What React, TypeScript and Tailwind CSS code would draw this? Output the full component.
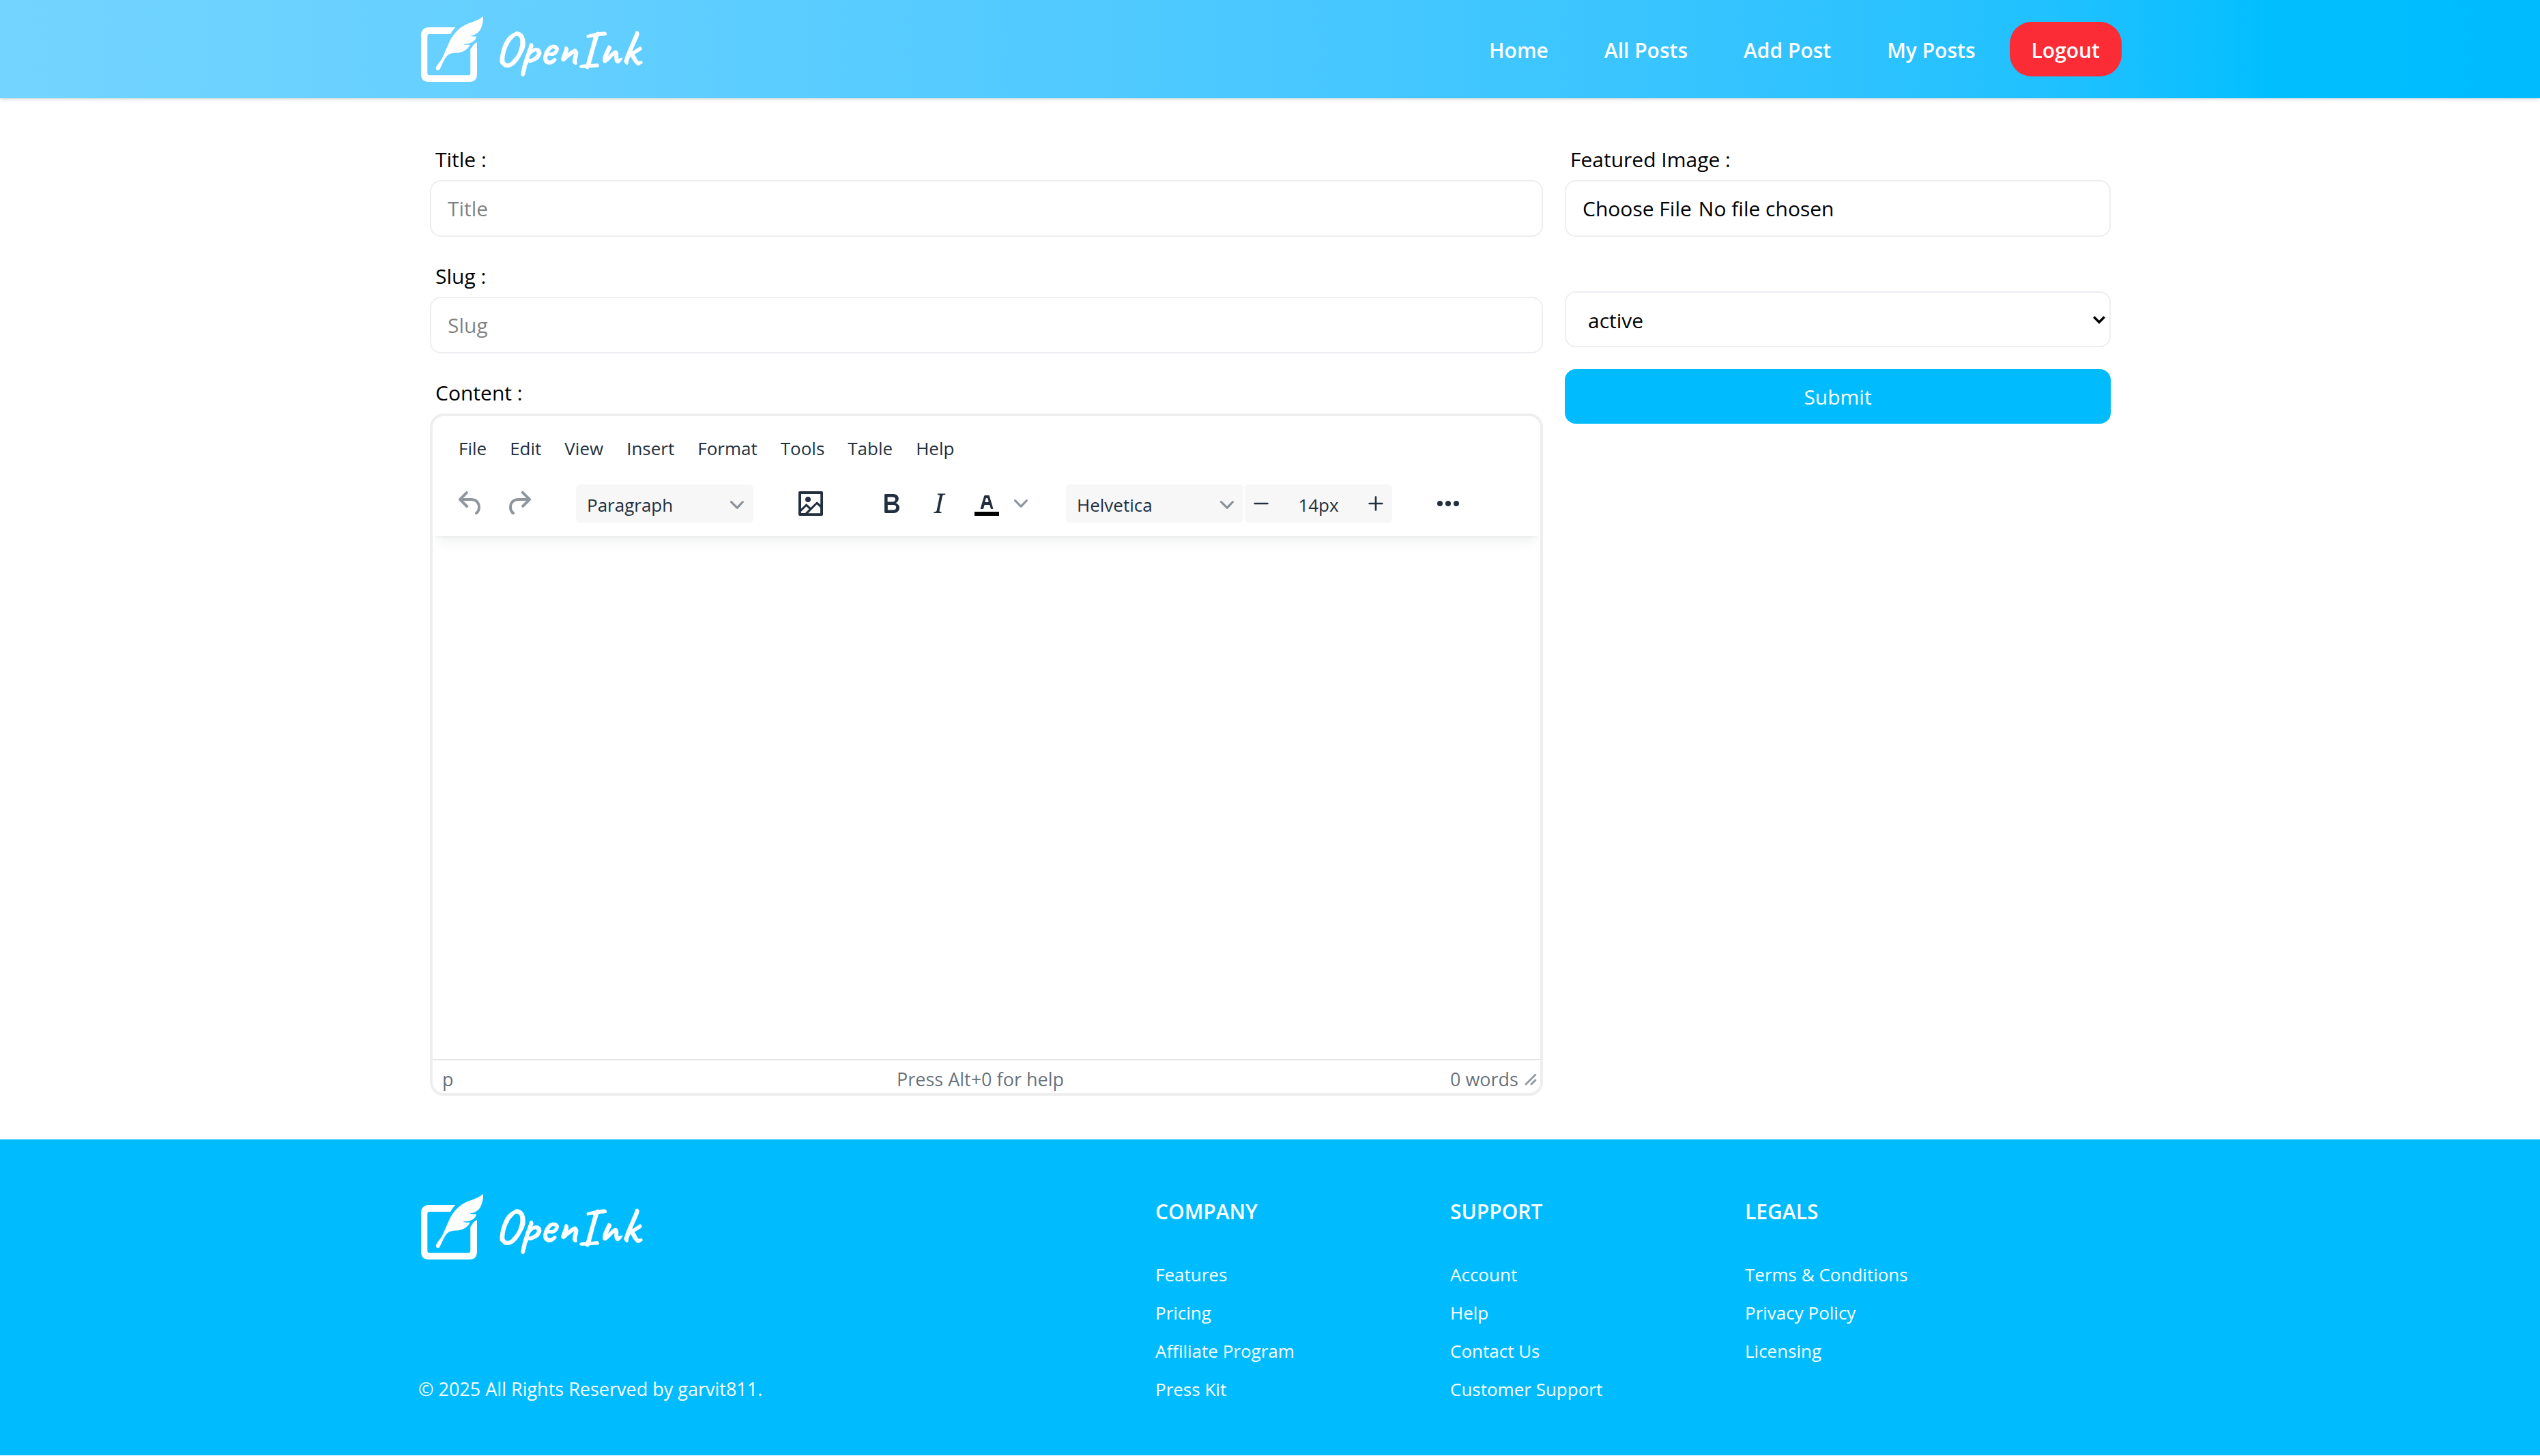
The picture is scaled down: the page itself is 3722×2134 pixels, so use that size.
import type { ReactNode } from 'react';

function Logo() {
  return (
    <span className="flex items-center gap-3 text-white">
      <svg viewBox="0 0 100 104" className="h-[104px] w-[100px]" fill="currentColor" aria-hidden="true">
        <path d="M54.3 20H15.5Q4 20.5 4 32V88.5Q4 100 15.5 100H74.5Q86 100 86 88.5V42Q83 43.5 80.3 46Q79 49 76.3 52V87Q76.3 90.3 73.3 90.3H16.3Q13.3 90.3 13.3 87V33Q13.3 30 16.3 30H47Q50 24.5 54.3 20Z" />
        <path d="M95 4C90 8 86 9.500 82 11.300C77 13.500 73 14.300 70.300 15.700C66.500 17.500 63 19.500 60.300 22C57 25 54 28 52 30.700C49.500 34 47 38 45.300 41.700L38.700 56.700C37 61 35.500 64.500 33.700 67.300C31 71.500 28 74.500 26.300 78C25.300 80 25.800 81.500 26.800 82.500C28.500 84 30.500 83.200 31.500 81.300L35.300 73.300C37 69.500 38.500 66.500 40.300 64C43 60.500 45.500 59 48.700 58.300C53 57.300 56.500 57.800 60.300 57C64.500 56.200 67.500 54.800 70.300 52.500C73.300 50 75 48 75.300 45.300C72 46.300 68.500 46 65.300 44.300C69 44.500 72.500 44.200 75.300 43.300C81.500 41.500 84.500 38 85 33.300C82 34 78.500 33.500 75.300 32.300C79 32 82.500 31.500 85.300 29.300C89 26.500 91 24 92 20.700C94.500 15.500 95.200 9.500 95 4Z" />
      </svg>
      <span className="font-[Caveat,cursive] text-[72px] leading-none font-bold">OpenInk</span>
    </span>
  );
}

const navItems = ['Home', 'All Posts', 'Add Post', 'My Posts'];

function Header() {
  return (
    <header className="relative bg-linear-to-r from-sky-300 to-sky-400 shadow-[0_2px_6px_rgba(0,0,0,0.1),0_2px_4px_-2px_rgba(0,0,0,0.1)]">
      <div className="mx-auto flex h-36 max-w-[2560px] items-center px-8">
        <a href="#home" aria-label="OpenInk home">
          <Logo />
        </a>
        <nav className="ml-auto flex gap-[18px] text-[30px] leading-[48px] font-semibold text-white">
          {navItems.map((item) => (
            <button key={item} type="button" className="rounded-[32px] px-8 pt-[18px] pb-[14px]">
              {item}
            </button>
          ))}
          <button type="button" className="rounded-[32px] bg-[#fb2c36] px-8 pt-[18px] pb-[14px]">
            Logout
          </button>
        </nav>
      </div>
    </header>
  );
}

function TextField({ id, label }: { id: string; label: string }) {
  return (
    <div className="mb-8">
      <label htmlFor={id} className="mb-1 block pl-2 leading-[52px]">
        {label} :
      </label>
      <input
        id={id}
        type="text"
        placeholder={label}
        className="h-[83px] w-full rounded-2xl border-2 border-[#eceef1] bg-white px-6 text-black outline-none"
      />
    </div>
  );
}

function Icon({ d, className = 'size-12' }: { d: string; className?: string }) {
  return (
    <svg viewBox="0 0 24 24" className={className} fill="currentColor" fillRule="evenodd" aria-hidden="true">
      <path d={d} />
    </svg>
  );
}

function Chevron() {
  return (
    <svg viewBox="0 0 10 10" className="size-5 shrink-0 opacity-50" fill="currentColor" aria-hidden="true">
      <path d="M8.7 2.2c.3-.3.8-.3 1 0 .4.4.4.9 0 1.2L5.700 7.800c-.3.3-.9.3-1.200 0L.2 3.400a.8.8 0 0 1 0-1.200c.3-.3.8-.3 1.100 0L5 6l3.700-3.800Z" />
    </svg>
  );
}

function ToolButton({ label, disabled, children }: { label: string; disabled?: boolean; children: ReactNode }) {
  return (
    <button
      type="button"
      aria-label={label}
      disabled={disabled}
      className="flex h-14 w-[70px] items-center pl-2.5 disabled:opacity-50"
    >
      {children}
    </button>
  );
}

function ToolSelect({ label }: { label: string }) {
  return (
    <button
      type="button"
      className="flex h-14 w-[260px] items-center justify-between rounded-md bg-[#f7f7f7] pt-1 pr-3.5 pl-4"
    >
      {label}
      <Chevron />
    </button>
  );
}

const paths = {
  undo: 'M6.4 8H12c3.7 0 6.2 2 6.8 5.1.6 2.7-.4 5.6-2.3 6.8a1 1 0 0 1-1-1.800c1.100-.6 1.800-2.700 1.400-4.600-.5-2.100-2.100-3.500-4.900-3.500H6.400l3.300 3.300a1 1 0 1 1-1.400 1.400l-5-5a1 1 0 0 1 0-1.400l5-5a1 1 0 0 1 1.400 1.400L6.400 8Z',
  redo: 'M17.6 10H12c-2.800 0-4.400 1.400-4.900 3.500-.4 2 .3 4 1.400 4.600a1 1 0 1 1-1 1.800c-2-1.200-2.900-4.100-2.300-6.800.6-3 3-5.100 6.800-5.100h5.600l-3.300-3.300a1 1 0 1 1 1.400-1.400l5 5a1 1 0 0 1 0 1.400l-5 5a1 1 0 0 1-1.400-1.400l3.300-3.300Z',
  image:
    'm5 15.700 3.300-3.200c.3-.3.7-.3 1 0L12 15l4.100-4c.3-.4.8-.4 1 0l2 1.900V5H5v10.700ZM5 18V19h3l2.800-2.900-2-2L5 17.900Zm14-3-2.500-2.400-6.400 6.500H19v-4ZM4 3h16c.6 0 1 .4 1 1v16c0 .6-.4 1-1 1H4a1 1 0 0 1-1-1V4c0-.6.4-1 1-1Zm6 8a2 2 0 1 0 0-4 2 2 0 0 0 0 4Z',
  bold: 'M7.800 19c-.3 0-.5 0-.6-.2l-.2-.5V5.700c0-.2 0-.4.2-.5l.6-.2h5c1.500 0 2.700.3 3.500 1 .7.6 1.100 1.400 1.100 2.500a3 3 0 0 1-.6 1.900c-.4.6-1 1-1.600 1.200.4.1.9.3 1.300.6s.8.7 1 1.200c.4.4.5 1 .5 1.600 0 1.300-.4 2.300-1.300 3-.8.7-2.100 1-3.800 1H7.800Zm5-8.300c.6 0 1.200-.1 1.600-.5.4-.3.6-.7.6-1.300 0-1.100-.8-1.700-2.300-1.700H9.300v3.500h3.400Zm.5 6c.7 0 1.300-.1 1.700-.4.4-.4.6-.9.6-1.500s-.2-1-.7-1.400c-.4-.3-1-.4-2-.4H9.400v3.800h4Z',
  italic:
    'm16.700 4.700-.1.9h-.3c-.6 0-1 0-1.400.3-.3.3-.4.6-.5 1.100l-2.100 9.800v.6c0 .5.4.8 1.400.8h.2l-.2.8H8l.2-.8h.2c1.100 0 1.800-.5 2-1.500l2-9.800.1-.5c0-.6-.4-.8-1.400-.8h-.3l.2-.9h5.800Z',
  textColor:
    'M8.700 16h-.8a.5.5 0 0 1-.5-.6l2.700-9c.1-.3.3-.4.5-.4h2.800c.2 0 .4.1.5.4l2.700 9a.5.5 0 0 1-.5.6h-.8a.5.5 0 0 1-.4-.4l-.7-2.200c0-.3-.3-.4-.5-.4h-3c-.2 0-.4.1-.5.4l-.6 2.200c0 .2-.2.4-.4.4Zm2.600-7.600-.6 2a.5.5 0 0 0 .5.6h1.600a.5.5 0 0 0 .5-.6l-.6-2c0-.3-.3-.4-.5-.4h-.4c-.2 0-.4.1-.5.4Z',
  minus: 'M19 11a1 1 0 0 1 .1 2H5a1 1 0 0 1-.1-2H19Z',
  plus: 'M12 4c.5 0 1 .4 1 .9V11h6a1 1 0 0 1 .1 2H13v6a1 1 0 0 1-2 .1V13H5a1 1 0 0 1-.1-2H11V5c0-.6.4-1 1-1Z',
  more: 'M6 10a2 2 0 1 0 0 4 2 2 0 0 0 0-4Zm12 0a2 2 0 1 0 0 4 2 2 0 0 0 0-4Zm-6 0a2 2 0 1 0 0 4 2 2 0 0 0 0-4Z',
};

const menus = ['File', 'Edit', 'View', 'Insert', 'Format', 'Tools', 'Table', 'Help'];

function Editor() {
  return (
    <div className="flex min-h-[1000px] flex-col overflow-hidden rounded-[20px] border-4 border-[#eeeeee] bg-white text-[26px] leading-9 text-[#222f3e]">
      <div className="relative px-1.5 pt-1.5 pb-2 shadow-[0_4px_4px_-4px_rgba(34,47,62,0.1),0_16px_16px_-8px_rgba(34,47,62,0.07)]">
        <div className="flex h-[82px] items-center gap-[34px] pl-8">
          {menus.map((menu) => (
            <button key={menu} type="button">
              {menu}
            </button>
          ))}
        </div>
        <div className="flex h-20 items-center gap-12 pl-4">
          <div className="flex">
            <ToolButton label="Undo" disabled>
              <Icon d={paths.undo} />
            </ToolButton>
            <ToolButton label="Redo" disabled>
              <Icon d={paths.redo} />
            </ToolButton>
          </div>
          <div className="flex pr-0.5">
            <ToolSelect label="Paragraph" />
          </div>
          <ToolButton label="Insert image">
            <Icon d={paths.image} />
          </ToolButton>
          <div className="flex">
            <ToolButton label="Bold">
              <Icon d={paths.bold} />
            </ToolButton>
            <ToolButton label="Italic">
              <Icon d={paths.italic} />
            </ToolButton>
            <ToolButton label="Text color">
              <svg viewBox="0 0 24 24" className="size-12" fill="currentColor" fillRule="evenodd" aria-hidden="true">
                <path d="M3 18h18v3H3z" fill="#000" />
                <path d={paths.textColor} />
              </svg>
            </ToolButton>
            <button type="button" aria-label="Text color menu" className="flex h-14 w-8 items-center pl-1">
              <Chevron />
            </button>
          </div>
          <div className="flex gap-0.5">
            <ToolSelect label="Helvetica" />
            <div className="flex h-14 w-[216px] items-center justify-between rounded-md bg-[#f7f7f7] px-2">
              <button type="button" aria-label="Decrease font size">
                <Icon d={paths.minus} className="size-8" />
              </button>
              <input
                type="text"
                aria-label="Font size"
                defaultValue="14px"
                className="w-24 bg-transparent pt-1 text-center outline-none"
              />
              <button type="button" aria-label="Increase font size">
                <Icon d={paths.plus} className="size-8" />
              </button>
            </div>
          </div>
          <ToolButton label="More">
            <Icon d={paths.more} />
          </ToolButton>
        </div>
      </div>
      <textarea aria-label="Content" className="w-full flex-1 resize-none p-8 outline-none" />
      <div className="flex h-[50px] items-center justify-between border-t-2 border-[#e3e3e3] pt-2 pr-1 pl-3.5 text-[27px] text-[#222f3e]/70">
        <div className="flex-1">p</div>
        <div className="pr-7">Press Alt+0 for help</div>
        <div className="flex flex-1 items-center justify-end gap-2">
          0 words
          <svg viewBox="0 0 10 10" className="size-5 opacity-70" fill="currentColor" aria-hidden="true">
            <path d="M8.100 1.100A.5.5 0 1 1 9 2L2 9A.5.5 0 1 1 1 8l7-7ZM8.100 5.100A.5.5 0 1 1 9 6L6 9A.5.5 0 1 1 5 8l3-3Z" />
          </svg>
        </div>
      </div>
    </div>
  );
}

function PostForm() {
  return (
    <form className="mx-auto flex max-w-[2560px] px-8 py-16 text-[30px] leading-[48px] text-black">
      <div className="w-2/3 pr-4 pl-[17px]">
        <TextField id="title" label="Title" />
        <TextField id="slug" label="Slug" />
        <div className="mb-1 pl-2 leading-[52px]">Content :</div>
        <Editor />
      </div>
      <div className="w-1/3 px-4">
        <label htmlFor="image" className="mb-1 block pl-2 leading-[52px]">
          Featured Image :
        </label>
        <input
          id="image"
          type="file"
          className="h-[83px] w-full rounded-2xl border-2 border-[#eceef1] bg-white px-6 py-4 file:mr-2.5"
        />
        <div className="relative mt-20">
          <select
            aria-label="Status"
            className="h-[82px] w-full appearance-none rounded-2xl border-2 border-[#eceef1] bg-white pt-1 pl-8"
          >
            <option>active</option>
            <option>inactive</option>
          </select>
          <svg
            viewBox="0 0 18 12"
            className="pointer-events-none absolute top-9 right-2 h-3 w-[18px]"
            fill="none"
            stroke="#000"
            strokeWidth="3.500"
            aria-hidden="true"
          >
            <path d="M1.300 1.500 9 9.200 16.700 1.500" />
          </svg>
        </div>
        <button type="submit" className="mt-8 h-20 w-full rounded-2xl bg-sky-400 pt-0.5 text-white">
          Submit
        </button>
      </div>
    </form>
  );
}

const footerColumns = [
  { title: 'COMPANY', links: ['Features', 'Pricing', 'Affiliate Program', 'Press Kit'] },
  { title: 'SUPPORT', links: ['Account', 'Help', 'Contact Us', 'Customer Support'] },
  { title: 'LEGALS', links: ['Terms & Conditions', 'Privacy Policy', 'Licensing'] },
];

function Footer() {
  return (
    <footer className="bg-sky-400 text-white">
      <div className="mx-auto flex max-w-[2560px] px-8 pt-20 pb-[77px]">
        <div className="flex w-[1080px] flex-col justify-between">
          <div className="-mt-1">
            <Logo />
          </div>
          <p className="text-[27px] leading-10">© 2025 All Rights Reserved by garvit811.</p>
        </div>
        {footerColumns.map((column) => (
          <div key={column.title} className="w-[432px]">
            <h3 className="mb-[46px] text-[30px] leading-[52px] font-semibold">{column.title}</h3>
            <ul className="flex flex-col gap-4 text-[26px] leading-10">
              {column.links.map((link) => (
                <li key={link}>
                  <a href="#footer">{link}</a>
                </li>
              ))}
            </ul>
          </div>
        ))}
      </div>
    </footer>
  );
}

export default function App() {
  return (
    <div className="min-h-screen bg-white font-['Open_Sans',sans-serif]">
      <Header />
      <main>
        <PostForm />
      </main>
      <Footer />
    </div>
  );
}
